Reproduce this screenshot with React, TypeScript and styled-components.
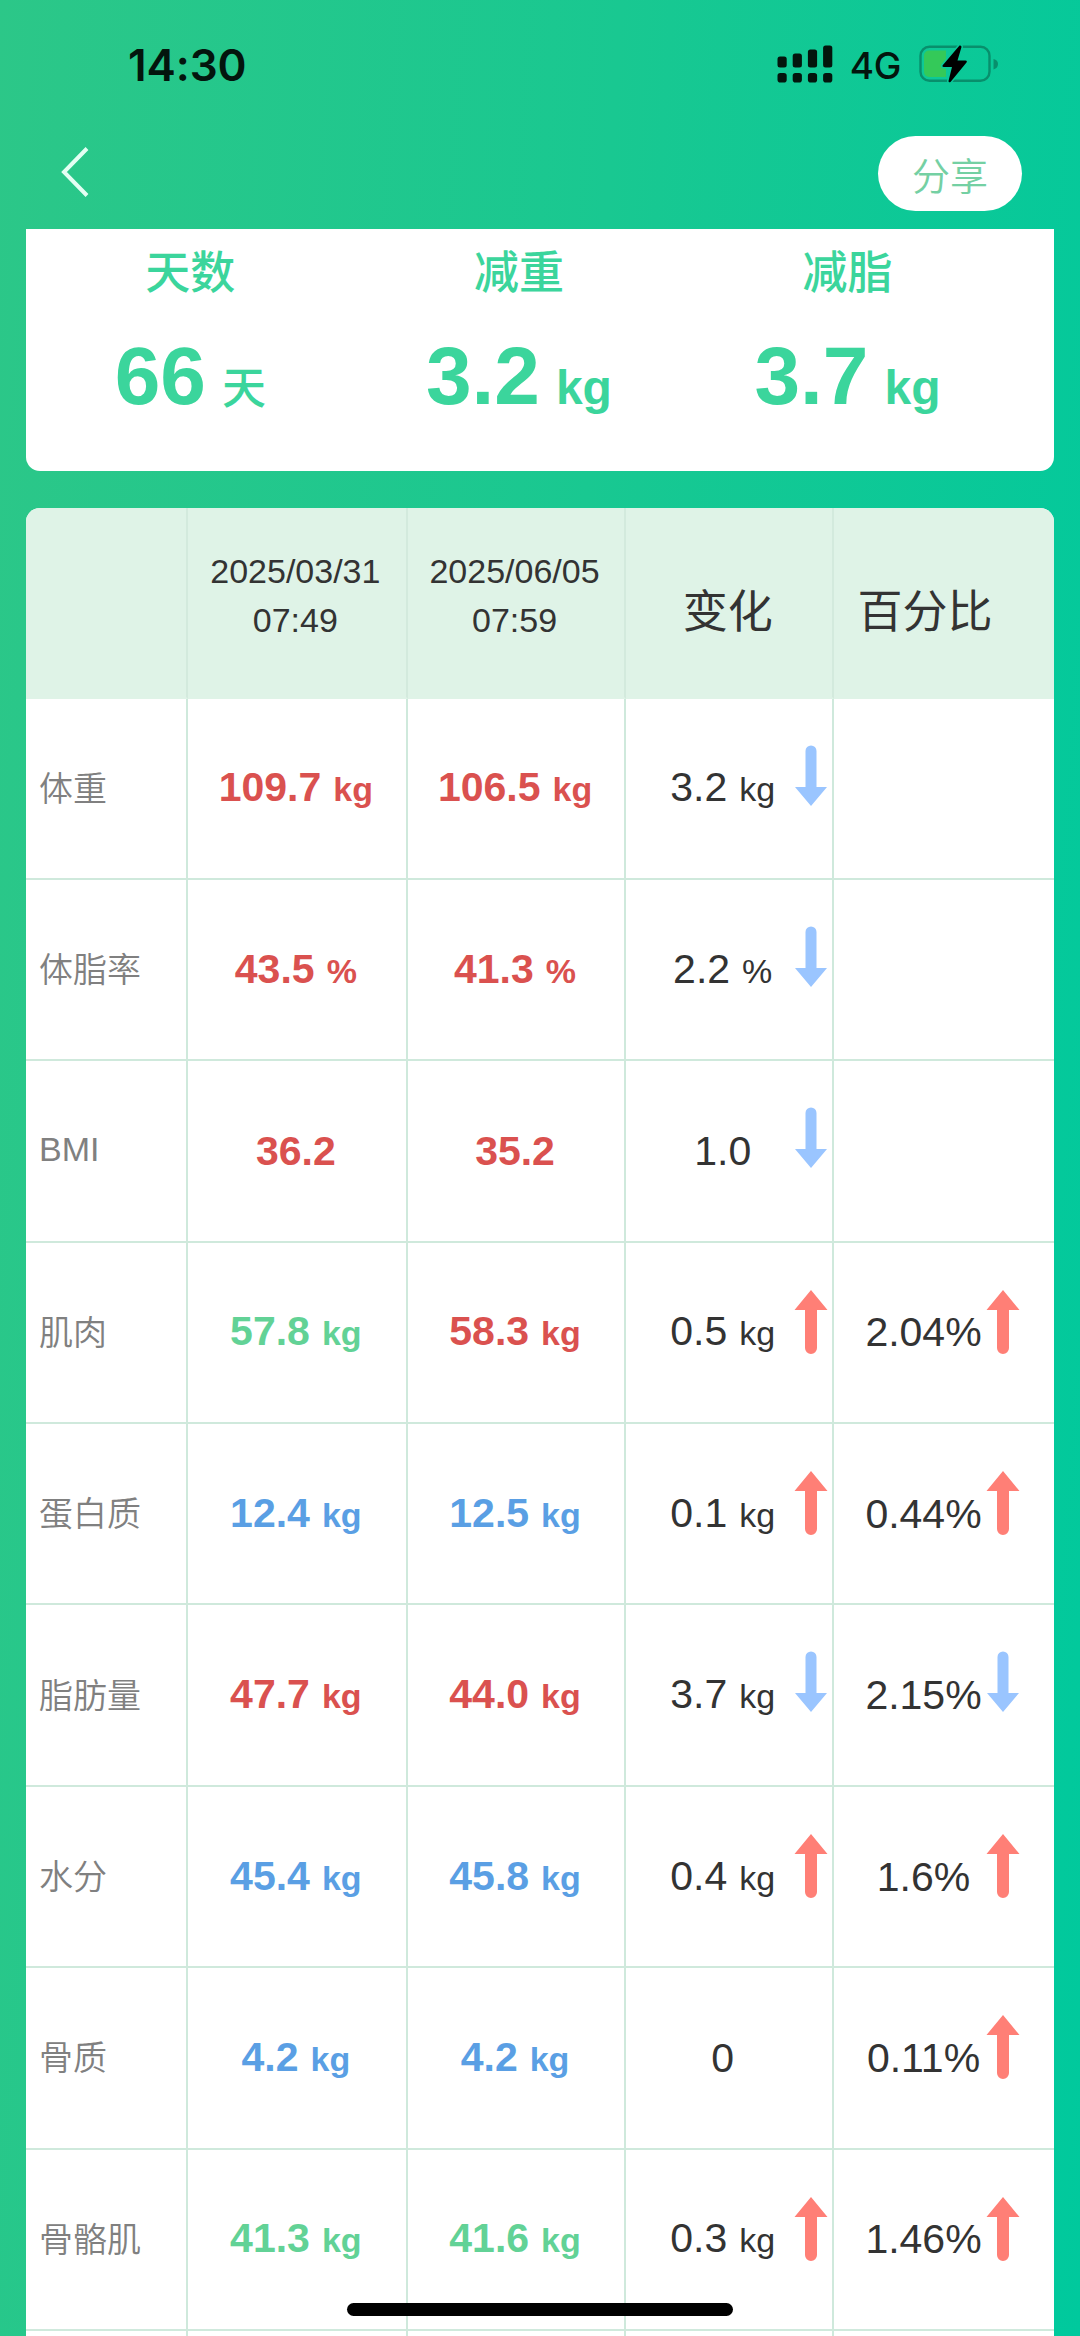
import React from 'react';
import styled, { createGlobalStyle } from 'styled-components';

const GlobalStyle = createGlobalStyle`
  * { box-sizing: border-box; }
  body { margin: 0; background: #14c994; }
`;

const sans = `"Liberation Sans", "Noto Sans CJK SC", sans-serif`;

const tones = {
  red: '#da514f',
  green: '#62d296',
  blue: '#5a9fe4',
};
type Tone = keyof typeof tones;
type Direction = 'up' | 'down';

const Screen = styled.main`
  position: relative;
  display: flex;
  flex-direction: column;
  width: 1080px;
  height: 2336px;
  overflow: hidden;
  padding: 0 26px;
  background: linear-gradient(94deg, #2cc788 0%, #19c891 50%, #00c99d 100%);
  font-family: ${sans};
  color: #333;
`;

const StatusBar = styled.header`
  display: flex;
  flex: none;
  justify-content: space-between;
  align-items: center;
  height: 130px;
  padding: 0 55px 0 102px;
`;

const Clock = styled.span`
  font: 600 44px/50px Inter, sans-serif;
  letter-spacing: -0.1px;
  color: #03150d;
`;

const StatusIcons = styled.div`
  display: flex;
  align-items: center;
  padding-bottom: 3px;
`;

const Network = styled.span`
  margin: 4px 18px 0 17px;
  font: 500 37px/40px Inter, sans-serif;
  letter-spacing: -0.4px;
  color: #03150d;
`;

const NavBar = styled.nav`
  display: flex;
  flex: none;
  justify-content: space-between;
  height: 99px;
  padding: 6px 32px 0 34px;
`;

const BackButton = styled.button`
  display: flex;
  width: 40px;
  height: 74px;
  padding: 10px 0 0;
  border: 0;
  background: none;
`;

const ShareButton = styled.button`
  width: 144px;
  height: 75px;
  padding: 0;
  border: 0;
  border-radius: 38px;
  background: #fff;
  color: #74d0a3;
  font: 350 38px/71px "Noto Sans CJK SC", sans-serif;
`;

const Summary = styled.section`
  display: grid;
  flex: none;
  grid-template-columns: repeat(3, 328.6px);
  height: 242px;
  background: #fff;
  border-radius: 0 0 14px 14px;
`;

const Stat = styled.div`
  display: flex;
  flex-direction: column;
  align-items: center;
  padding-top: 15px;
  color: #3bd59c;
`;

const StatLabel = styled.span`
  font-size: 45px;
  line-height: 60px;
  font-weight: 500;
`;

const StatValue = styled.span`
  display: flex;
  align-items: baseline;
  gap: 16px;
  margin-top: 25px;
  font-weight: 700;
  font-size: 82px;
  line-height: 94px;
`;

const StatUnit = styled.span<{ $medium?: boolean }>`
  font-size: ${(p) => (p.$medium ? 44 : 48)}px;
  font-weight: ${(p) => (p.$medium ? 500 : 700)};
`;

const Table = styled.section`
  display: grid;
  flex: none;
  grid-template-columns: 162px 219.7px 218.7px 207.7px 219.9px;
  grid-template-rows: 190.6px;
  grid-auto-rows: 181.38px;
  margin-top: 37px;
  background: #fff;
  border-radius: 14px 14px 0 0;
  overflow: hidden;
`;

const Cell = styled.div`
  position: relative;
  display: flex;
  align-items: center;
  justify-content: center;
  border-right: 2px solid #cfe9dc;
  border-bottom: 2px solid #cfe9dc;

  &:nth-child(5n) {
    border-right: 0;
  }
`;

const HeadCell = styled(Cell)<{ $shift?: number; $large?: boolean }>`
  padding: ${(p) => (p.$large ? '20px' : '0')} ${(p) => p.$shift ?? 3}px ${(p) => (p.$large ? '0' : '12px')} 0;
  background: #dff3e7;
  border-color: #d3eadd;
  border-bottom-color: #dff3e7;
  font-size: ${(p) => (p.$large ? 45 : 34)}px;
  line-height: 49.5px;
  text-align: center;
`;

const LabelCell = styled(Cell)`
  justify-content: flex-start;
  padding-left: 13px;
  padding-bottom: 4px;
  font-size: 34px;
  font-weight: 350;
  color: #808080;
`;

const ValueCell = styled(Cell)<{ $tone?: Tone; $shift?: number }>`
  padding: 0 ${(p) => p.$shift ?? 2}px 0 0;
  color: ${(p) => (p.$tone ? tones[p.$tone] : '#333')};
  font-weight: ${(p) => (p.$tone ? 700 : 400)};
`;

const Amount = styled.span`
  display: flex;
  align-items: baseline;
  gap: 12px;
  font-size: 41px;
  line-height: 48px;
`;

const Unit = styled.span`
  font-size: 34px;
`;

const ArrowSlot = styled.span<{ $right: number }>`
  position: absolute;
  top: 46px;
  right: ${(p) => p.$right}px;
  display: flex;
`;

const HomeIndicator = styled.div`
  position: absolute;
  left: 347px;
  bottom: 20px;
  width: 386px;
  height: 13px;
  border-radius: 7px;
  background: #000;
`;

function Arrow({ direction }: { direction: Direction }) {
  return direction === 'up' ? (
    <svg width="34" height="66" viewBox="0 0 34 66" fill="#ff7f76">
      <path d="M17 1 L33.5 21 H23 V59 a6 6 0 0 1 -12 0 V21 H0.5 Z" />
    </svg>
  ) : (
    <svg width="34" height="62" viewBox="0 0 34 62" fill="#9ac5ff">
      <path d="M17 61 L1 42 H11.5 V6 a5.5 5.5 0 0 1 11 0 V42 H33 Z" />
    </svg>
  );
}

function Signal() {
  return (
    <svg width="56" height="38" viewBox="0 0 56 38" fill="#03150d">
      {[11, 14, 18, 22].map((h, i) => (
        <React.Fragment key={h}>
          <rect x={0.5 + i * 15.2} y={22.5 - h} width="9.2" height={h} rx="2.5" />
          <rect x={0.5 + i * 15.2} y="28" width="9.2" height="9.5" rx="2.8" />
        </React.Fragment>
      ))}
    </svg>
  );
}

function Battery() {
  return (
    <svg width="80" height="38" viewBox="0 0 80 38">
      <rect x="1.5" y="1.7" width="69" height="34" rx="9" fill="none" stroke="#088f6c" strokeWidth="2.4" />
      <path d="M74.5 14 Q79 15 79 19 Q79 23 74.5 24.5 Z" fill="#088f6c" />
      <path d="M27 5.5 H10 a5 5 0 0 0 -5 5 V27 a5 5 0 0 0 5 5 H27 Z" fill="#34c959" />
      <path
        d="M40.5 0.5 L23.5 20.5 Q23 22 25 22 H33 L29.5 36 Q29.5 38 31.5 37 L47.5 17.5 Q48.5 15.5 46.5 15.5 H38.5 L42.5 2 Q42.5 0 40.5 0.5 Z"
        fill="#000"
        stroke="#0ac99a"
        strokeWidth="3"
        paintOrder="stroke"
      />
    </svg>
  );
}

type Reading = { value: string; unit?: string; tone?: Tone };
type Delta = { value: string; unit?: string; direction?: Direction };
type Row = { label: string; before: Reading; after: Reading; change: Delta; percent?: Delta };

const kg = (value: string, tone: Tone): Reading => ({ value, unit: 'kg', tone });

const rows: Row[] = [
  { label: '体重', before: kg('109.7', 'red'), after: kg('106.5', 'red'), change: { value: '3.2', unit: 'kg', direction: 'down' } },
  {
    label: '体脂率',
    before: { value: '43.5', unit: '%', tone: 'red' },
    after: { value: '41.3', unit: '%', tone: 'red' },
    change: { value: '2.2', unit: '%', direction: 'down' },
  },
  { label: 'BMI', before: { value: '36.2', tone: 'red' }, after: { value: '35.2', tone: 'red' }, change: { value: '1.0', direction: 'down' } },
  { label: '肌肉', before: kg('57.8', 'green'), after: kg('58.3', 'red'), change: { value: '0.5', unit: 'kg', direction: 'up' }, percent: { value: '2.04%', direction: 'up' } },
  { label: '蛋白质', before: kg('12.4', 'blue'), after: kg('12.5', 'blue'), change: { value: '0.1', unit: 'kg', direction: 'up' }, percent: { value: '0.44%', direction: 'up' } },
  { label: '脂肪量', before: kg('47.7', 'red'), after: kg('44.0', 'red'), change: { value: '3.7', unit: 'kg', direction: 'down' }, percent: { value: '2.15%', direction: 'down' } },
  { label: '水分', before: kg('45.4', 'blue'), after: kg('45.8', 'blue'), change: { value: '0.4', unit: 'kg', direction: 'up' }, percent: { value: '1.6%', direction: 'up' } },
  { label: '骨质', before: kg('4.2', 'blue'), after: kg('4.2', 'blue'), change: { value: '0' }, percent: { value: '0.11%', direction: 'up' } },
  { label: '骨骼肌', before: kg('41.3', 'green'), after: kg('41.6', 'green'), change: { value: '0.3', unit: 'kg', direction: 'up' }, percent: { value: '1.46%', direction: 'up' } },
];

function Measure({ value, unit }: { value: string; unit?: string }) {
  return (
    <Amount>
      {value}
      {unit && <Unit>{unit}</Unit>}
    </Amount>
  );
}

export default function App() {
  return (
    <Screen>
      <GlobalStyle />
      <StatusBar>
        <Clock>14:30</Clock>
        <StatusIcons>
          <Signal />
          <Network>4G</Network>
          <Battery />
        </StatusIcons>
      </StatusBar>
      <NavBar>
        <BackButton aria-label="返回">
          <svg width="32" height="52" viewBox="0 0 32 52" fill="none" stroke="#e3fff3" strokeWidth="4">
            <path d="M27 2.5 L4 26 L27 49.5" />
          </svg>
        </BackButton>
        <ShareButton>分享</ShareButton>
      </NavBar>
      <Summary>
        <Stat>
          <StatLabel>天数</StatLabel>
          <StatValue>66<StatUnit $medium>天</StatUnit></StatValue>
        </Stat>
        <Stat>
          <StatLabel>减重</StatLabel>
          <StatValue>3.2<StatUnit>kg</StatUnit></StatValue>
        </Stat>
        <Stat>
          <StatLabel>减脂</StatLabel>
          <StatValue>3.7<StatUnit>kg</StatUnit></StatValue>
        </Stat>
      </Summary>
      <Table>
        <HeadCell />
        <HeadCell>2025/03/31<br />07:49</HeadCell>
        <HeadCell>2025/06/05<br />07:59</HeadCell>
        <HeadCell $large>变化</HeadCell>
        <HeadCell $large $shift={38}>百分比</HeadCell>
        {rows.map((row) => (
          <React.Fragment key={row.label}>
            <LabelCell>{row.label}</LabelCell>
            <ValueCell $tone={row.before.tone}><Measure value={row.before.value} unit={row.before.unit} /></ValueCell>
            <ValueCell $tone={row.after.tone}><Measure value={row.after.value} unit={row.after.unit} /></ValueCell>
            <ValueCell $shift={13}>
              <Measure value={row.change.value} unit={row.change.unit} />
              {row.change.direction && <ArrowSlot $right={4}><Arrow direction={row.change.direction} /></ArrowSlot>}
            </ValueCell>
            <ValueCell $shift={41}>
              {row.percent && <Measure value={row.percent.value} />}
              {row.percent?.direction && <ArrowSlot $right={34}><Arrow direction={row.percent.direction} /></ArrowSlot>}
            </ValueCell>
          </React.Fragment>
        ))}
        <Cell /><Cell /><Cell /><Cell /><Cell />
      </Table>
      <HomeIndicator />
    </Screen>
  );
}
